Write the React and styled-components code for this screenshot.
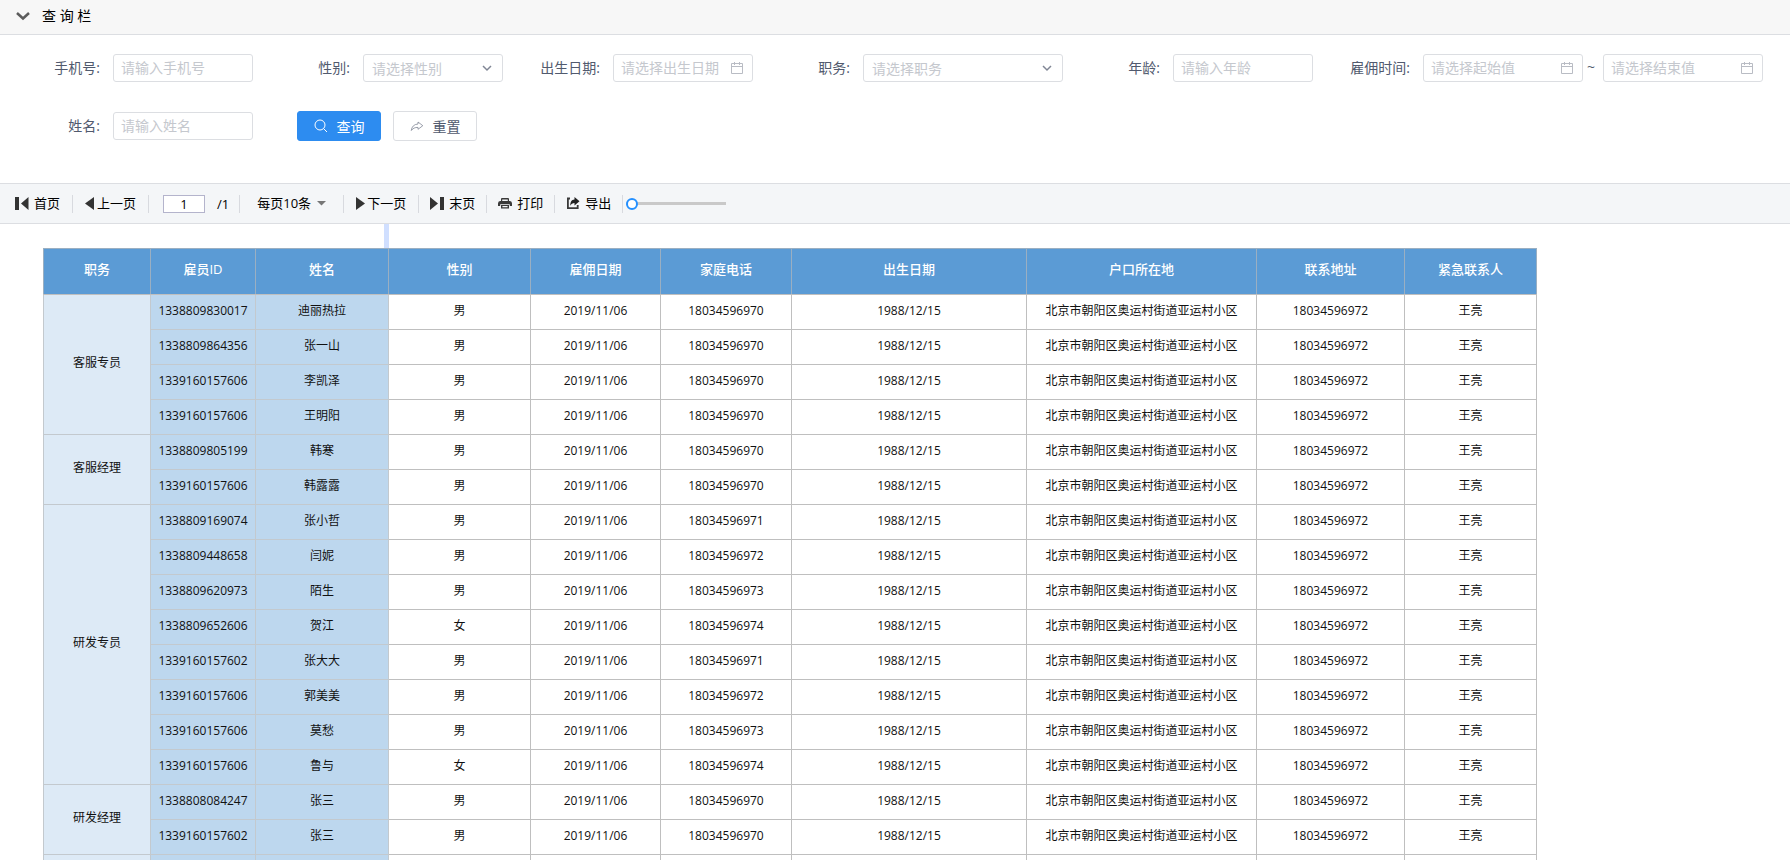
import React from "react";
import styled, { createGlobalStyle, css } from "styled-components";

const GlobalStyle = createGlobalStyle`
  * { box-sizing: border-box; }
  body { margin: 0; background: #fff; }
  body, button, input, select {
    font-family: "Open Sans", "Noto Sans CJK SC", sans-serif;
  }
`;

const Page = styled.div`
  display: flex;
  flex-direction: column;
  height: 100vh;
  overflow: hidden;
`;

const PanelHeader = styled.button`
  display: flex;
  align-items: center;
  gap: 12px;
  width: 100%;
  height: 35px;
  flex: none;
  padding: 0 16px 3px;
  border: 0;
  border-bottom: 1px solid #dcdee2;
  background: #f7f7f7;
  color: #000;
  font-size: 14px;
  line-height: 20px;
  text-align: left;
`;

const QueryForm = styled.form`
  display: flex;
  flex-wrap: wrap;
  align-content: flex-start;
  row-gap: 28px;
  flex: none;
  padding: 18px 13px 42px;
`;

const Field = styled.div`
  display: flex;
  align-items: center;
  height: 30px;
  margin-right: 10px;
`;

const Label = styled.label`
  width: 100px;
  padding: 0 13px 1px 0;
  color: #515a6e;
  font-size: 14px;
  line-height: 20px;
  text-align: right;
`;

const controlStyle = css`
  width: ${(p) => p.$width || 140}px;
  height: 28px;
  padding: 0 7px 2px;
  border: 1px solid #dcdee2;
  border-radius: 3px;
  background: #fff;
  color: #515a6e;
  font-size: 14px;
  outline: none;
`;

const TextInput = styled.input`
  ${controlStyle}
  &::placeholder { color: #c5c8ce; opacity: 1; }
`;

const ControlWrap = styled.div`
  position: relative;
  display: flex;
`;

const ControlIcon = styled.span`
  position: absolute;
  top: 0;
  right: 9px;
  display: flex;
  align-items: center;
  height: 100%;
  pointer-events: none;
`;

const SelectInput = styled.select`
  ${controlStyle}
  padding: 0 8px;
  appearance: none;
  color: #c5c8ce;
`;

const Tilde = styled.span`
  width: 20px;
  padding: 0 4px 3px;
  color: #515a6e;
  font-size: 14px;
`;

const Actions = styled.div`
  display: flex;
  gap: 12px;
  margin-left: 34px;
`;

const ActionButton = styled.button`
  display: flex;
  align-items: center;
  justify-content: center;
  gap: 9px;
  width: 84px;
  height: 30px;
  padding: 0 0 1px;
  border: 1px solid ${(p) => (p.$primary ? "#2d8cf0" : "#dcdee2")};
  border-radius: 3px;
  background: ${(p) => (p.$primary ? "#2d8cf0" : "#fff")};
  color: ${(p) => (p.$primary ? "#fff" : "#515a6e")};
  font-size: 14px;
`;

const Toolbar = styled.div`
  display: flex;
  align-items: center;
  flex: none;
  height: 41px;
  padding-left: 2px;
  border-top: 1px solid #dcdee2;
  border-bottom: 1px solid #dcdee2;
  background: #f4f6f8;
`;

const ToolButton = styled.button`
  display: flex;
  align-items: center;
  gap: ${(p) => (p.$tight ? 2 : 5)}px;
  padding: 0 ${(p) => (p.$compact ? 11 : 12)}px 1px;
  border: 0;
  background: none;
  color: #000;
  font-size: 13px;
  line-height: 20px;
`;

const Separator = styled.span`
  width: 1px;
  height: 18px;
  background: #d8dadf;
`;

const PageNumber = styled.div`
  display: flex;
  align-items: center;
  gap: 12px;
  padding: 0 10px 0 14px;
  font-size: 13px;
  line-height: 20px;
`;

const PageInput = styled.input`
  width: 42px;
  height: 18px;
  padding: 0;
  border: 1px solid #b4b4cc;
  background: #fff;
  color: #000;
  font-size: 13px;
  text-align: center;
`;

const PageSize = styled.div`
  position: relative;
  display: flex;
  align-items: center;
  padding: 0 16px 2px 17px;
`;

const PageSizeSelect = styled.select`
  width: 70px;
  height: 20px;
  padding: 0;
  border: 0;
  background: none;
  appearance: none;
  color: #000;
  font-size: 13px;
`;

const PageSizeCaret = styled(ControlIcon)`
  right: 17px;
`;

const Zoom = styled.input`
  appearance: none;
  width: 100px;
  height: 12px;
  margin: 0 0 0 3px;
  background: linear-gradient(#c9c9c9, #c9c9c9) center / 100% 3px no-repeat;
  &::-webkit-slider-thumb {
    appearance: none;
    width: 12px;
    height: 12px;
    border: 2px solid #2490ff;
    border-radius: 50%;
    background: #fff;
  }
`;

const Report = styled.main`
  flex: 1;
  min-height: 0;
  overflow: hidden;
`;

const FreezeHandle = styled.div`
  width: 5px;
  height: 24px;
  margin-left: 384px;
  background: #d0dfff;
`;

const Sheet = styled.table`
  width: 1494px;
  margin-left: 43px;
  border-collapse: collapse;
  table-layout: fixed;
  color: #111;
  font-size: 12px;
  line-height: 16px;
`;

const HeadCell = styled.th`
  height: 46px;
  padding: 0 0 6px;
  border: 1px solid #9aafc2;
  border-bottom-color: #bfbfbf;
  background: #5b9bd5;
  color: #fff;
  font-size: 13px;
  font-weight: 500;
`;

const fills = { group: "#ddeaf6", key: "#bdd7ee", plain: "#fff" };

const Cell = styled.td`
  height: 35px;
  padding: 0 0 3px;
  border: 1px solid ${(p) => (p.$fill === "plain" ? "#bfbfbf" : "#c3c9ce")};
  background: ${(p) => fills[p.$fill]};
  text-align: center;
  white-space: nowrap;
`;

const Chevron = () => (
  <svg width="14" height="14" viewBox="0 0 14 14" fill="none" stroke="#808695" strokeWidth="1.5">
    <path d="M3 5l4 4 4-4" />
  </svg>
);

const PanelArrow = () => (
  <svg width="14" height="14" viewBox="0 0 14 14" fill="none" stroke="#5c5c5c" strokeWidth="2.5">
    <path d="M1 4l6 5.500L13 4" />
  </svg>
);

const CalendarIcon = () => (
  <svg width="14" height="14" viewBox="0 0 14 14" fill="none" stroke="#b9bcc4">
    <path d="M1.500 2.500h11v10h-11zM1.500 5.500h11M4.500 1v3M9.500 1v3" />
  </svg>
);

const SearchIcon = () => (
  <svg width="14" height="14" viewBox="0 0 14 14" fill="none" stroke="#fff">
    <circle cx="6" cy="6" r="5" />
    <path d="M9.600 9.600l3.400 3.400" />
  </svg>
);

const ResetIcon = () => (
  <svg width="14" height="14" viewBox="0 0 14 14" fill="none" stroke="#808695" strokeWidth=".8">
    <path d="M8 3l4.800 3.700L8 10.300V8.400C4.800 8.300 3 9.300 1.300 11.500 1.700 7.700 4 5.200 8 5z" />
  </svg>
);

const FirstIcon = () => (
  <svg width="15" height="15" viewBox="0 0 15 15" fill="#333">
    <path d="M1 1h4v13H1zM14.500 1v13L7 7.500z" />
  </svg>
);

const PrevIcon = () => (
  <svg width="10" height="15" viewBox="0 0 10 15" fill="#333">
    <path d="M9 1v13L0 7.500z" />
  </svg>
);

const NextIcon = () => (
  <svg width="9" height="15" viewBox="0 0 9 15" fill="#333">
    <path d="M0 1v13L9 7.500z" />
  </svg>
);

const LastIcon = () => (
  <svg width="14" height="15" viewBox="0 0 14 15" fill="#333">
    <path d="M0 1v13l8-6.500zM10 1h4v13h-4z" />
  </svg>
);

const PrintIcon = () => (
  <svg width="14" height="14" viewBox="0 0 14 14" fill="#3a3a3a">
    <path d="M3 5.500V3q0-1 1-1h6q1 0 1 1v2.500H9.800V3.400H4.200v2.100z" />
    <path d="M2 5h10q2 0 2 2.500V10h-2.200V8.300H2.200V10H0V7.500Q0 5 2 5z" />
    <path d="M3 9h8v3.500H3zM4.400 10v1.300h5.200V10z" fillRule="evenodd" />
  </svg>
);

const ExportIcon = () => (
  <svg width="14" height="14" viewBox="0 0 14 14">
    <path d="M4 2.500H1.900v9.600h9.800V9" fill="none" stroke="#3a3a3a" strokeWidth="1.800" />
    <path d="M8.500 1l5 4.200-5 4.200V7C6.500 7 5.300 7.800 4.300 9.800 4.200 6 5.500 3.600 8.500 3.400z" fill="#222" />
  </svg>
);

const CaretIcon = () => (
  <svg width="9" height="5" viewBox="0 0 9 5" fill="#777">
    <path d="M0 0h9L4.500 4.500z" />
  </svg>
);

const TextField = ({ id, label, placeholder }) => (
  <Field>
    <Label htmlFor={id}>{label}:</Label>
    <TextInput id={id} placeholder={placeholder} />
  </Field>
);

const DateControl = ({ width, ...rest }) => (
  <ControlWrap>
    <TextInput $width={width} {...rest} />
    <ControlIcon><CalendarIcon /></ControlIcon>
  </ControlWrap>
);

const SelectField = ({ id, label, placeholder, width }) => (
  <Field>
    <Label htmlFor={id}>{label}:</Label>
    <ControlWrap>
      <SelectInput id={id} $width={width}>
        <option>{placeholder}</option>
      </SelectInput>
      <ControlIcon><Chevron /></ControlIcon>
    </ControlWrap>
  </Field>
);

const columns = [
  ["职务", 107], ["雇员ID", 105], ["姓名", 133], ["性别", 142], ["雇佣日期", 130],
  ["家庭电话", 131], ["出生日期", 235], ["户口所在地", 230], ["联系地址", 148], ["紧急联系人", 132],
];

const groups = [
  ["客服专员", [
    ["1338809830017", "迪丽热拉", "男", "18034596970"],
    ["1338809864356", "张一山", "男", "18034596970"],
    ["1339160157606", "李凯泽", "男", "18034596970"],
    ["1339160157606", "王明阳", "男", "18034596970"],
  ]],
  ["客服经理", [
    ["1338809805199", "韩寒", "男", "18034596970"],
    ["1339160157606", "韩露露", "男", "18034596970"],
  ]],
  ["研发专员", [
    ["1338809169074", "张小哲", "男", "18034596971"],
    ["1338809448658", "闫妮", "男", "18034596972"],
    ["1338809620973", "陌生", "男", "18034596973"],
    ["1338809652606", "贺江", "女", "18034596974"],
    ["1339160157602", "张大大", "男", "18034596971"],
    ["1339160157606", "郭美美", "男", "18034596972"],
    ["1339160157606", "莫愁", "男", "18034596973"],
    ["1339160157606", "鲁与", "女", "18034596974"],
  ]],
  ["研发经理", [
    ["1338808084247", "张三", "男", "18034596970"],
    ["1339160157602", "张三", "男", "18034596970"],
  ]],
];

const EmployeeRow = ({ row: [id, name, sex, phone], group, span }) => (
  <tr>
    {group && <Cell $fill="group" rowSpan={span}>{group}</Cell>}
    <Cell $fill="key">{id}</Cell>
    <Cell $fill="key">{name}</Cell>
    <Cell $fill="plain">{sex}</Cell>
    <Cell $fill="plain">2019/11/06</Cell>
    <Cell $fill="plain">{phone}</Cell>
    <Cell $fill="plain">1988/12/15</Cell>
    <Cell $fill="plain">北京市朝阳区奥运村街道亚运村小区</Cell>
    <Cell $fill="plain">18034596972</Cell>
    <Cell $fill="plain">王亮</Cell>
  </tr>
);

export default function App() {
  return (
    <Page>
      <GlobalStyle />
      <PanelHeader type="button" aria-expanded="true">
        <PanelArrow />
        查 询 栏
      </PanelHeader>

      <QueryForm>
        <TextField id="mobile" label="手机号" placeholder="请输入手机号" />
        <SelectField id="sex" label="性别" placeholder="请选择性别" />
        <Field>
          <Label htmlFor="birth">出生日期:</Label>
          <DateControl id="birth" placeholder="请选择出生日期" />
        </Field>
        <SelectField id="duty" label="职务" placeholder="请选择职务" width={200} />
        <TextField id="age" label="年龄" placeholder="请输入年龄" />
        <Field>
          <Label htmlFor="hired-from">雇佣时间:</Label>
          <DateControl id="hired-from" width={160} placeholder="请选择起始值" />
          <Tilde>~</Tilde>
          <DateControl width={160} placeholder="请选择结束值" aria-label="请选择结束值" />
        </Field>
        <TextField id="name" label="姓名" placeholder="请输入姓名" />
        <Actions>
          <ActionButton type="button" $primary><SearchIcon />查询</ActionButton>
          <ActionButton type="reset"><ResetIcon />重置</ActionButton>
        </Actions>
      </QueryForm>

      <Toolbar>
        <ToolButton><FirstIcon />首页</ToolButton>
        <Separator />
        <ToolButton $tight><PrevIcon />上一页</ToolButton>
        <Separator />
        <PageNumber>
          <PageInput aria-label="页码" defaultValue="1" />
          <span>/1</span>
        </PageNumber>
        <Separator />
        <PageSize>
          <PageSizeSelect aria-label="每页条数">
            <option>每页10条</option>
          </PageSizeSelect>
          <PageSizeCaret><CaretIcon /></PageSizeCaret>
        </PageSize>
        <Separator />
        <ToolButton $tight><NextIcon />下一页</ToolButton>
        <Separator />
        <ToolButton $compact><LastIcon />末页</ToolButton>
        <Separator />
        <ToolButton $compact><PrintIcon />打印</ToolButton>
        <Separator />
        <ToolButton $compact><ExportIcon />导出</ToolButton>
        <Separator />
        <Zoom type="range" min="0" max="100" defaultValue="0" aria-label="缩放" />
      </Toolbar>

      <Report>
        <FreezeHandle />
        <Sheet>
          <colgroup>
            {columns.map(([title, width]) => <col key={title} style={{ width }} />)}
          </colgroup>
          <thead>
            <tr>{columns.map(([title]) => <HeadCell key={title}>{title}</HeadCell>)}</tr>
          </thead>
          <tbody>
            {groups.map(([group, rows]) =>
              rows.map((row, i) => (
                <EmployeeRow
                  key={group + i}
                  row={row}
                  group={i === 0 ? group : null}
                  span={rows.length}
                />
              ))
            )}
            <tr>
              {columns.map(([title], i) => (
                <Cell key={title} $fill={i === 0 ? "group" : i < 3 ? "key" : "plain"} />
              ))}
            </tr>
          </tbody>
        </Sheet>
      </Report>
    </Page>
  );
}
